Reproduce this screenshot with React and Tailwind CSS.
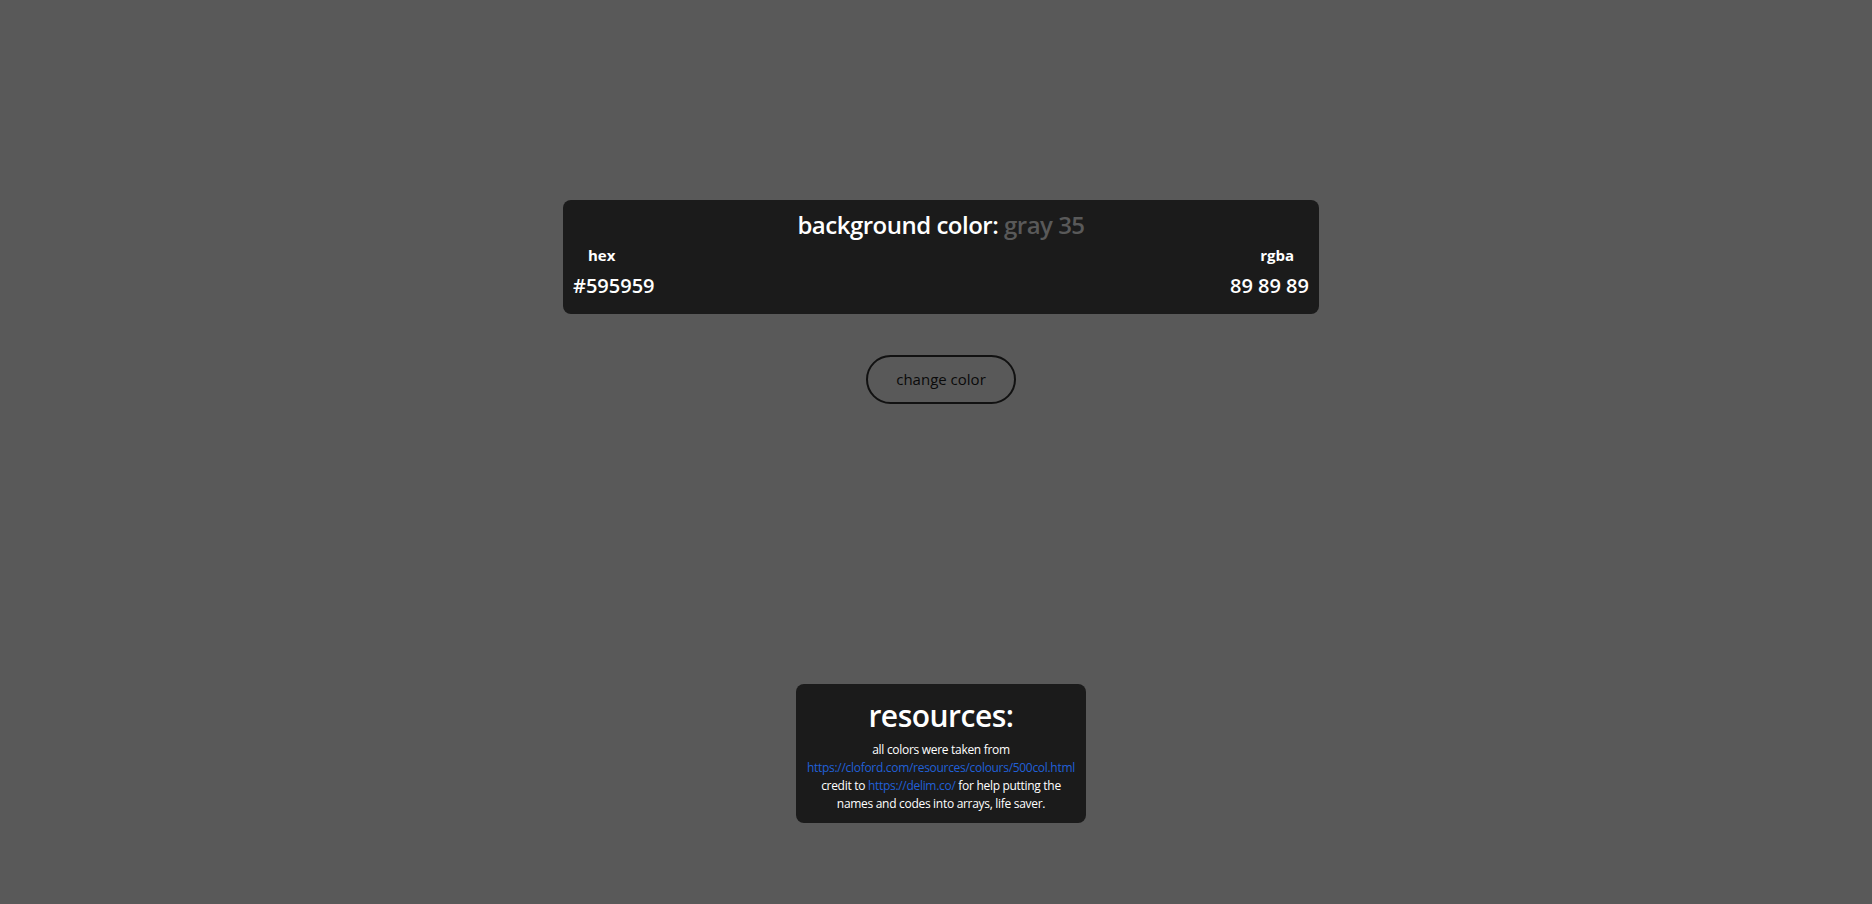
import React from "react";

const FONT = { fontFamily: '"Open Sans", "Noto Sans", sans-serif' };

function InfoCard() {
  return (
    <div className="w-[756px] rounded-lg bg-[#1b1b1b] px-[10px] pt-[9px] pb-[14px] text-white">
      <h1 className="text-center text-[24px] leading-[32px] font-semibold tracking-[-0.5px]">
        background color: <span className="text-[#595959]">gray 35</span>
      </h1>
      <div className="mt-[4px] flex justify-between px-[15px] text-[15px] leading-[20px] font-bold">
        <span>hex</span>
        <span>rgba</span>
      </div>
      <div className="mt-[7px] flex justify-between text-[20px] leading-[28px] font-semibold">
        <span>#595959</span>
        <span>89 89 89</span>
      </div>
    </div>
  );
}

function Resources() {
  return (
    <div className="w-[290px] rounded-lg bg-[#1b1b1b] px-[8px] pt-[12px] pb-[10px] text-center text-white">
      <h2 className="text-[30px] leading-[40px] font-semibold tracking-[-0.5px]">resources:</h2>
      <p className="mt-[5px] text-[12px] leading-[18px] tracking-[-0.3px] whitespace-nowrap">
        all colors were taken from
        <br />
        <a href="#" className="text-[#2160d8]">https://cloford.com/resources/colours/500col.html</a>
        <br />
        credit to <a href="#" className="text-[#2160d8]">https://delim.co/</a> for help putting the
        <br />
        names and codes into arrays, life saver.
      </p>
    </div>
  );
}

export default function App() {
  return (
    <div style={FONT} className="min-h-screen bg-[#595959] pl-[10px] flex flex-col items-center pt-[200px]">
      <InfoCard />
      <button className="mt-[41px] h-[49px] w-[150px] rounded-full border-2 border-[#111111] text-[15px] font-medium text-[#0a0a0a]">
        change color
      </button>
      <div className="mt-[280px]">
        <Resources />
      </div>
    </div>
  );
}
